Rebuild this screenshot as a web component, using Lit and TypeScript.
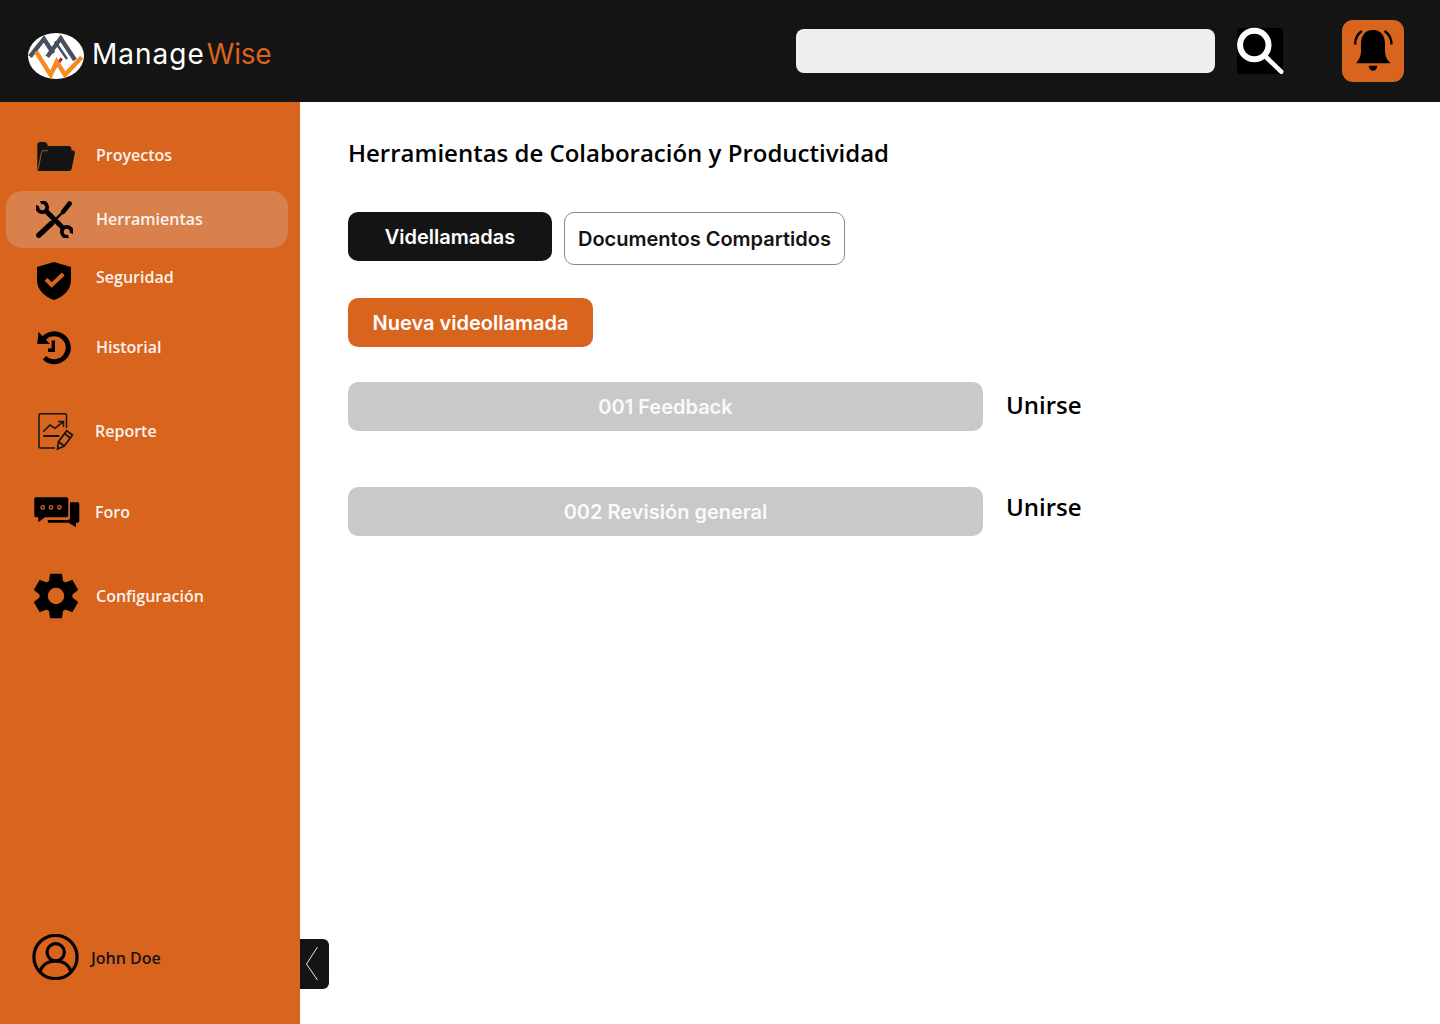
import { LitElement, html, css, svg } from 'lit';
import { customElement } from 'lit/decorators.js';

const ORANGE = '#d9641e';
const INK = '#141414';

// six tooth cog, same outline on every side
function gearPath(cx: number, cy: number) {
  const pts: string[] = [];
  for (let i = 0; i < 6; i++) {
    const a = (i * 60 - 90) * Math.PI / 180;
    const at = (r: number, d: number) => {
      const t = a + d * Math.PI / 180;
      return `${(cx + r * Math.cos(t)).toFixed(2)} ${(cy + r * Math.sin(t)).toFixed(2)}`;
    };
    pts.push(at(16.5, -25), at(23, -15), at(23, 15), at(16.5, 25));
  }
  const r = 8.2;
  return `M${pts.join('L')}Z M${cx - r} ${cy}a${r} ${r} 0 1 0 ${r * 2} 0a${r} ${r} 0 1 0 ${-r * 2} 0Z`;
}

const icons = {
  folder: svg`
    <path d="M.3 27V3Q.3 0 3.500 0H7Q10 0 10.500 3L11 4H32Q34 4 34.500 7V9H5V27Z" fill="${INK}"/>
    <path d="M5 8.600H36Q38.300 8.600 37.900 11L34.600 27Q34.200 29 32 29H2Q0 29 .5 27Z" fill="${INK}"/>
    <path d="M1.200 27.500 4.500 10Q4.800 8.700 6 8.700H11" fill="none" stroke="${ORANGE}" stroke-width=".8"/>`,
  tools: svg`
    <g fill="none" stroke="#000">
      <path d="M2.800 34.200 15.700 22.300" stroke-width="5.400" stroke-linecap="round"/>
      <path d="M15.700 22.300 27.300 10.700" stroke-width="2.400"/>
      <path d="M27.300 10.700 33.600 2.500" stroke-width="4.600" stroke-linecap="round"/>
      <path d="M9.500 9.500 27.500 27.500" stroke-width="5"/>
      <path d="M1.500 4.500A5 5 0 1 0 4.500 1.500" stroke-width="3.800"/>
      <path d="M35.500 32.500A5 5 0 1 0 32.500 35.500" stroke-width="3.800"/>
    </g>`,
  shield: svg`
    <path d="M17 0 34 5V18C34 28 26 35 17 38 8 35 0 28 0 18V5Z" fill="#000"/>
    <path d="M9 17.300 14.700 23 26.300 12" fill="none" stroke="${ORANGE}" stroke-width="4"/>`,
  history: svg`
    <path d="M1.500 1.700 .3 14H13Z" fill="#000"/>
    <path d="M5 11A14 14 0 1 1 7.500 27.700" fill="none" stroke="#000" stroke-width="5"/>
    <path d="M16.300 10.500V20.300H11" fill="none" stroke="#000" stroke-width="3.400"/>`,
  report: svg`
    <g fill="none" stroke="${INK}" stroke-width="1.500">
      <path d="M28.500 15V2Q28.500.8 27 .8H2.500Q1 .8 1 2.500V33.500Q1 35 2.500 35H17"/>
      <path d="M5.300 18.700 12 12 17 15.300 25.300 8.700M20 8.500H25.500V14"/>
      <path d="M5.300 23H21.300" stroke-width="2"/>
      <path d="M19.500 36 20.500 28.700 28.700 17.700 34.500 22 26.300 33ZM20.500 28.700 26.300 33M26.500 20.500 32.300 25" stroke-width="1.700"/>
    </g>`,
  chat: svg`
    <path d="M14 25.700H34.500L42 30.300V25.700H43.500Q45.300 25.700 45.300 24V7Q45.300 5.300 43.500 5.300H36V21Q36 23 33.500 23H13.700Z" fill="#000"/>
    <path d="M2 .3H32.500Q34.300.3 34.300 2V18.500Q34.300 20.300 32.500 20.300H11L4.300 25.300V20.300H2Q.3 20.300.3 18.500V2Q.3.3 2 .3Z" fill="#000"/>
    <g fill="none" stroke="${ORANGE}" stroke-width="1.300">
      <circle cx="8.700" cy="10.300" r="1.700"/><circle cx="17" cy="10.300" r="1.700"/><circle cx="25.300" cy="10.300" r="1.700"/>
    </g>`,
  gear: svg`<path d="${gearPath(23, 23)}" fill="#000" fill-rule="evenodd"/>`,
};

const navItems = [
  { label: 'Proyectos', icon: icons.folder, w: 38, h: 29, dx: 31, dy: 2 },
  { label: 'Herramientas', icon: icons.tools, w: 37, h: 37, dx: 30, dy: 0, active: true },
  { label: 'Seguridad', icon: icons.shield, w: 34, h: 38, dx: 31, dy: 8 },
  { label: 'Historial', icon: icons.history, w: 34, h: 35, dx: 31, dy: 0 },
  { label: 'Reporte', icon: icons.report, w: 36, h: 37, dx: 32, dy: 0, shift: -1 },
  { label: 'Foro', icon: icons.chat, w: 46, h: 31, dx: 28, dy: 0, shift: -1 },
  { label: 'Configuración', icon: icons.gear, w: 46, h: 46, dx: 27, dy: 0 },
];

@customElement('app-root')
export class AppRoot extends LitElement {
  static styles = css`
    :host {
      display: block;
      width: 1440px;
      height: 1024px;
      overflow: hidden;
      background: #fff;
      font-family: 'Open Sans', sans-serif;
      color: #000;
    }

    /* top bar */
    .topbar {
      height: 102px;
      background: #141414;
      display: flex;
      align-items: center;
      padding-left: 28px;
      box-sizing: border-box;
    }
    .brand {
      display: flex;
      align-items: center;
      gap: 8px;
      width: 768px;
      margin-top: 5px;
    }
    .brand svg { margin-top: 4px; }
    .wordmark {
      font-family: 'Inter', sans-serif;
      font-size: 28px;
      font-weight: 400;
      letter-spacing: 1px;
      color: #fff;
    }
    .wordmark span { color: #d9641e; margin-left: 2px; letter-spacing: -0.2px; }
    .search {
      width: 419px;
      height: 44px;
      border-radius: 8px;
      background: #efefef;
    }
    .search-btn {
      width: 46px;
      height: 46px;
      margin-left: 22px;
      background: #000;
      border-radius: 4px;
    }
    .search-btn svg, .bell svg { display: block; overflow: visible; }
    .bell {
      width: 62px;
      height: 62px;
      margin-left: 59px;
      margin-top: -1px;
      border-radius: 11px;
      background: #d9641e;
    }

    .body {
      position: relative;
      display: flex;
      height: 922px;
    }

    /* sidebar */
    .sidebar {
      width: 300px;
      flex: none;
      background: #d9641e;
      display: flex;
      flex-direction: column;
      justify-content: space-between;
      box-sizing: border-box;
      padding: 25px 12px 0 6px;
    }
    .nav {
      display: grid;
      grid-template-rows: 64px 57px 58px 82px 86px 76px 92px;
    }
    .item {
      display: flex;
      align-items: center;
      font-size: 16px;
      font-weight: 600;
      color: #fbf3ee;
      border-radius: 16px;
    }
    .item:first-child { margin-bottom: 8px; }
    .item.active { background: rgba(217, 217, 217, 0.25); }
    .item.active span { margin-top: -2px; }
    .slot {
      width: 90px;
      flex: none;
      display: flex;
    }
    .slot svg { display: block; }
    .user {
      display: flex;
      align-items: center;
      gap: 12px;
      padding: 0 0 44px 26px;
      font-size: 16px;
      font-weight: 600;
      color: #141414;
    }
    .user svg { display: block; }
    .user span { margin-top: 2px; }

    .collapse {
      position: absolute;
      left: 300px;
      top: 837px;
      width: 29px;
      height: 50px;
      background: #141414;
      border-radius: 0 6px 6px 0;
    }
    .collapse svg { display: block; }

    /* content */
    .main {
      flex: 1;
      padding: 32px 0 0 48px;
    }
    h1 {
      margin: 0;
      font-size: 24px;
      line-height: 38px;
      font-weight: 600;
      color: #000;
    }
    .tabs {
      display: flex;
      align-items: flex-start;
      gap: 12px;
      margin-top: 40px;
    }
    button {
      font-family: 'Inter', sans-serif;
      font-size: 20px;
      font-weight: 600;
      border: 0;
      padding: 0;
      border-radius: 10px;
      display: block;
    }
    .tab-on {
      width: 204px;
      height: 49px;
      background: #141414;
      color: #fff;
    }
    .tab-off {
      width: 281px;
      height: 53px;
      background: #fff;
      color: #141414;
      border: 1px solid #8a8a8a;
      box-sizing: border-box;
    }
    .new {
      width: 245px;
      height: 49px;
      margin-top: 33px;
      background: #d9641e;
      color: #fff;
    }
    .call {
      display: flex;
      align-items: flex-start;
      gap: 23px;
      margin-top: 35px;
    }
    .call + .call { margin-top: 56px; }
    .call button {
      width: 635px;
      height: 49px;
      background: #c9c9c9;
      color: #fafafa;
    }
    .join {
      font-size: 24px;
      font-weight: 600;
      line-height: 46px;
      color: #000;
    }
    .call + .call .join { margin-top: -3px; }
  `;

  render() {
    return html`
      <header class="topbar">
        <div class="brand">
          <svg width="56" height="46" viewBox="0 0 56 46">
            <ellipse cx="28" cy="23" rx="28" ry="23" fill="#fff"/>
            <g fill="none" stroke-width="4.400">
              <path d="M2 23.700 16 6 25.300 20.300" stroke="#46505e"/>
              <path d="M19.300 23.700 32.700 5.300 47 27" stroke="#46505e"/>
              <path d="M27 8.500 39 26" stroke="#46505e" stroke-width="2.400"/>
              <path d="M25.300 37 33.700 25.300" stroke="#b3123a" stroke-width="3"/>
              <path d="M8 18.700 22.700 42 28.700 28.700 37 42 53.700 24.300" stroke="#f58a1f"/>
            </g>
          </svg>
          <div class="wordmark">Manage<span>Wise</span></div>
        </div>
        <div class="search"></div>
        <div class="search-btn">
          <svg width="46" height="46" viewBox="0 0 46 46" fill="none" stroke="#fff">
            <circle cx="17.300" cy="17" r="14.200" stroke-width="6"/>
            <path d="M28 28 44.200 43.700" stroke-width="4.600" stroke-linecap="round"/>
          </svg>
        </div>
        <div class="bell">
          <svg width="62" height="62" viewBox="0 0 62 62">
            <path d="M31 10C22 10 19 17 19 24V30C19 36 17 40 14 43.300H48.700C45 40 43 36 43 30V24C43 17 40 10 31 10Z" fill="#000"/>
            <path d="M26.700 45.700H35.300C35 49 33 50.700 31 50.700S27 49 26.700 45.700Z" fill="#000"/>
            <path d="M13.200 24.500C13 19 15.500 14 19.800 11M49.500 24.500C49.700 19 47 14 42.500 11" fill="none" stroke="#000" stroke-width="2.400"/>
          </svg>
        </div>
      </header>
      <div class="body">
        <aside class="sidebar">
          <nav class="nav">
            ${navItems.map(n => html`
              <div class="item ${n.active ? 'active' : ''}">
                <div class="slot" style="padding-left:${n.dx}px;width:${90 + (n.shift ?? 0) - n.dx}px;margin-top:${n.dy}px">
                  <svg width=${n.w} height=${n.h} viewBox="0 0 ${n.w} ${n.h}">${n.icon}</svg>
                </div>
                <span>${n.label}</span>
              </div>`)}
          </nav>
          <div class="user">
            <svg width="47" height="46" viewBox="0 0 47 46" fill="none" stroke="#000" stroke-width="3.200">
              <circle cx="23.500" cy="23" r="21.600"/>
              <circle cx="23.700" cy="18.300" r="8.600"/>
              <path d="M7.500 38.500C10 31 16 27 23.700 27 31.500 27 37 31 39.500 38.500"/>
            </svg>
            <span>John Doe</span>
          </div>
        </aside>
        <div class="collapse">
          <svg width="29" height="50" viewBox="0 0 29 50" fill="none" stroke="#e8e8e8" stroke-width="1">
            <path d="M17.500 8 6.500 25 17.500 41"/>
          </svg>
        </div>
        <main class="main">
          <h1>Herramientas de Colaboración y Productividad</h1>
          <div class="tabs">
            <button class="tab-on">Videllamadas</button>
            <button class="tab-off">Documentos Compartidos</button>
          </div>
          <button class="new">Nueva videollamada</button>
          <div class="call">
            <button>001 Feedback</button>
            <span class="join">Unirse</span>
          </div>
          <div class="call">
            <button>002 Revisión general</button>
            <span class="join">Unirse</span>
          </div>
        </main>
      </div>
    `;
  }
}
